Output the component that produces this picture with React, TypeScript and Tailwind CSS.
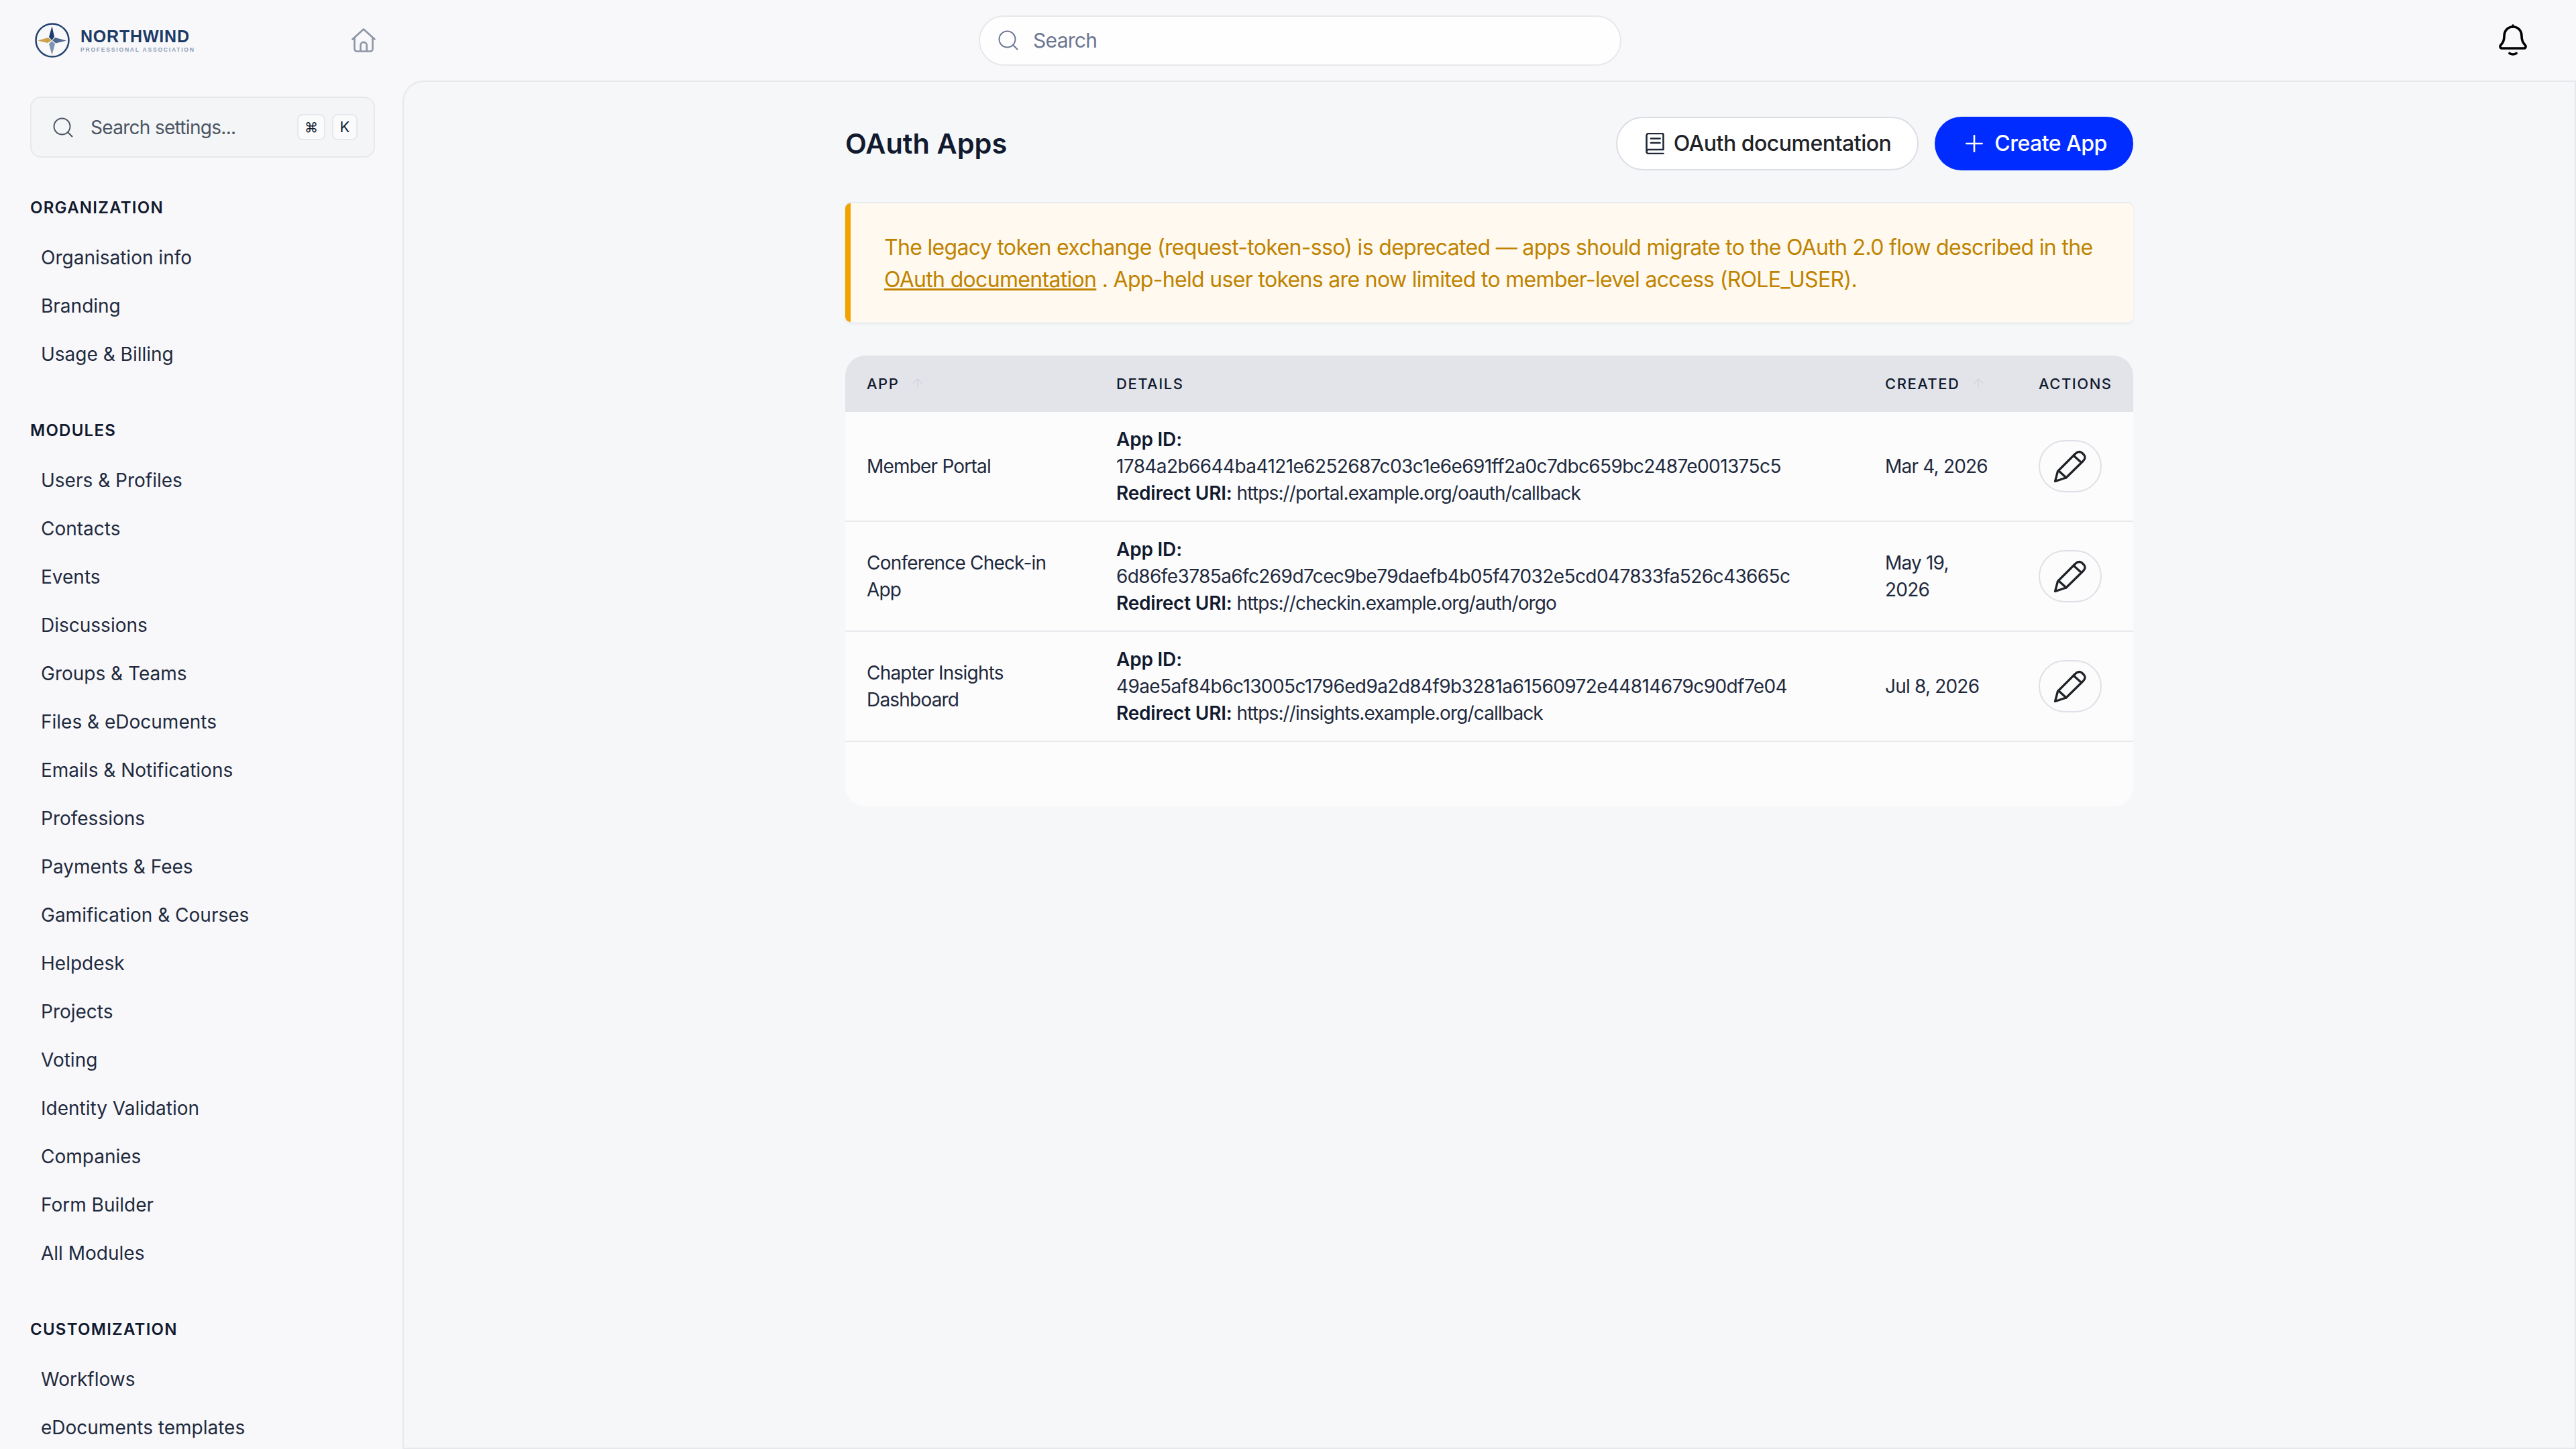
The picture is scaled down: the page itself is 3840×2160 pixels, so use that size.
import React from 'react';
import { Plus, Search, ArrowUp } from 'lucide-react';

const organization = ['Organisation info', 'Branding', 'Usage & Billing'];
const modules = [
    'Users & Profiles', 'Contacts', 'Events', 'Discussions', 'Groups & Teams', 'Files & eDocuments',
    'Emails & Notifications', 'Professions', 'Payments & Fees', 'Gamification & Courses', 'Helpdesk',
    'Projects', 'Voting', 'Identity Validation', 'Companies', 'Form Builder', 'All Modules',
];
const customization = ['Workflows', 'eDocuments templates'];

const apps = [
    {
        name: 'Member Portal',
        id: '1784a2b6644ba4121e6252687c03c1e6e691ff2a0c7dbc659bc2487e001375c5',
        uri: 'https://portal.example.org/oauth/callback',
        created: 'Mar 4, 2026',
    },
    {
        name: 'Conference Check-in App',
        id: '6d86fe3785a6fc269d7cec9be79daefb4b05f47032e5cd047833fa526c43665c',
        uri: 'https://checkin.example.org/auth/orgo',
        created: 'May 19, 2026',
    },
    {
        name: 'Chapter Insights Dashboard',
        id: '49ae5af84b6c13005c1796ed9a2d84f9b3281a61560972e44814679c90df7e04',
        uri: 'https://insights.example.org/callback',
        created: 'Jul 8, 2026',
    },
];

const Logo = () => (
    <svg width="54" height="54" viewBox="0 0 54 54" className="shrink-0">
        <circle cx="27" cy="27" r="24.5" fill="none" stroke="#24446f" strokeWidth="2.5" />
        <path d="M26.5 6 L30 22 L26 27 L22 22 Z" fill="#1d3b6b" />
        <path d="M5 27.5 L21 23 L25.5 27.5 L20 31 Z" fill="#c9a24a" />
        <path d="M48 27.5 L32 31.5 L27 27 L31 23 Z" fill="#4f6a8f" />
        <path d="M26.5 49 L22 32.5 L26.5 28 L31 32.5 Z" fill="#8094b0" />
    </svg>
);

const HomeIcon = () => (
    <svg width="36" height="36" viewBox="0 0 36 36" fill="none" stroke="#8d95a5" strokeWidth="2.6" strokeLinecap="round" strokeLinejoin="round">
        <path d="M1.5 16.5 L18 1.5 L34.5 16.5" />
        <path d="M4.5 14 V31 a3.5 3.5 0 0 0 3.5 3.5 H28 a3.5 3.5 0 0 0 3.5-3.5 V14" />
        <path d="M13.5 34 V25.5 a4.6 4.6 0 0 1 9.2 0 V34" />
    </svg>
);

const BookIcon = () => (
    <svg width="28" height="32" viewBox="0 0 28 32" fill="none" stroke="#1f2937" strokeWidth="2.6" strokeLinecap="round" strokeLinejoin="round">
        <path d="M1.5 27.5 V4 a3 3 0 0 1 3-3 H24.5 a2 2 0 0 1 2 2 V25 H4.5 a3 3 0 0 0 0 6 H26.5" />
        <path d="M8 8.5 H21.5" />
        <path d="M8 15 H21.5" />
    </svg>
);

const PencilIcon = () => (
    <svg width="48" height="48" viewBox="0 0 48 48" fill="none" stroke="#1f2327" strokeWidth="3.3" strokeLinecap="round" strokeLinejoin="round">
        <path d="M1.5 46.5 L5.5 31.5 L31.5 5.5 Q37 0.5 41.5 4 L44.5 7 Q48 11 43.5 16 L18 41 Z" />
        <path d="M7 31 L18 41" />
        <path d="M29 8 L40.5 18.5" />
    </svg>
);

const BellIcon = () => (
    <svg width="42" height="48" viewBox="0 0 42 48" fill="none" stroke="#000000" strokeWidth="3.6" strokeLinecap="round" strokeLinejoin="round">
        <path d="M21 4 C13 4 8 10 8 18 C8 25 6 28 3 31 C1 33 2 36 5 36 H37 C40 36 41 33 39 31 C36 28 34 25 34 18 C34 10 29 4 21 4 Z" />
        <path d="M21 2 V4" />
        <path d="M16 43.5 Q21 46.5 26 43.5" />
    </svg>
);

const SectionTitle: React.FC<{ title: string; className: string }> = ({ title, className }) => (
    <div className={`h-[36px] flex items-center text-[24px] font-semibold tracking-[1.25px] text-[#111a2e] ${className}`}>{title}</div>
);

const NavList: React.FC<{ items: string[] }> = ({ items }) => (
    <ul className="mt-[20px]">
        {items.map(item => (
            <li key={item} className="h-[72px] flex items-center pl-[16px] text-[28px] text-[#1f2a3d]">{item}</li>
        ))}
    </ul>
);

const Sidebar = () => (
    <aside className="w-[600px] shrink-0 pl-[45px] pr-[41px] pt-[24px] overflow-hidden">
        <div className="h-[91px] rounded-[16px] border-2 border-[#e7e8ec] bg-[#f4f5f7] flex items-center pl-[29px] pr-[24px]">
            <Search size={36} strokeWidth={1.3} className="text-[#4b5563] shrink-0" />
            <span className="ml-[23px] text-[28px] tracking-[-0.7px] text-[#4b5563]">Search settings...</span>
            <div className="ml-auto flex gap-[10px]">
                <kbd className="w-[42px] h-[39px] rounded-[8px] border-2 border-[#e7e8ec] bg-[#fbfbfc] flex items-center justify-center text-[20px] text-[#111a2e] font-[inherit]">⌘</kbd>
                <kbd className="w-[38px] h-[39px] rounded-[8px] border-2 border-[#e7e8ec] bg-[#fbfbfc] flex items-center justify-center text-[22px] text-[#111a2e] font-[inherit]">K</kbd>
            </div>
        </div>
        <SectionTitle title="ORGANIZATION" className="mt-[57px]" />
        <NavList items={organization} />
        <SectionTitle title="MODULES" className="mt-[60px]" />
        <NavList items={modules} />
        <SectionTitle title="CUSTOMIZATION" className="mt-[60px]" />
        <NavList items={customization} />
    </aside>
);

const App: React.FC = () => {
    return (
        <div className="w-[3840px] h-[2160px] overflow-hidden flex flex-col bg-[#f8f8fb] font-['Inter',sans-serif] text-[#1f2a3d]">
            <header className="h-[120px] shrink-0 flex items-center">
                <div className="w-[600px] shrink-0 pl-[51px] pr-[40px] flex items-center">
                    <Logo />
                    <div className="ml-[15px] font-['Liberation_Sans',sans-serif]">
                        <div className="text-[25px] leading-[28px] font-bold tracking-[0.8px] text-[#1c3a66]">NORTHWIND</div>
                        <div className="text-[8.6px] leading-[12px] font-bold tracking-[1.75px] text-[#8b9bb3] whitespace-nowrap">PROFESSIONAL ASSOCIATION</div>
                    </div>
                    <div className="ml-auto"><HomeIcon /></div>
                </div>
                <div className="ml-[859px] w-[958px] h-[75px] rounded-full border-2 border-[#e7e8ec] bg-[#fefefe] flex items-center pl-[24px]">
                    <Search size={36} strokeWidth={1.3} className="text-[#6b7690]" />
                    <span className="ml-[19px] text-[30px] tracking-[-0.7px] text-[#6b7690]">Search</span>
                </div>
                <div className="ml-auto mr-[73px]"><BellIcon /></div>
            </header>
            <div className="flex-1 flex min-h-0">
                <Sidebar />
                <main className="flex-1 rounded-tl-[32px] border-2 border-[#e7e8ec] bg-[#f6f7f9] pt-[52px]">
                    <div className="w-[1920px] mx-auto">
                        <div className="flex items-center justify-between">
                            <h1 className="text-[41.5px] font-semibold text-[#111a2e]">OAuth Apps</h1>
                            <div className="flex gap-[24px]">
                                <button className="h-[80px] w-[451px] pl-[3px] rounded-full border-2 border-[#dcdee5] bg-white flex items-center justify-center gap-[14px] text-[32px] font-medium tracking-[-0.5px] text-[#1f2327]">
                                    <BookIcon />
                                    OAuth documentation
                                </button>
                                <button className="h-[80px] w-[296px] rounded-full bg-[#002cff] flex items-center justify-center gap-[10px] text-[32px] font-medium tracking-[-0.5px] text-white">
                                    <Plus size={40} strokeWidth={1.6} />
                                    Create App
                                </button>
                            </div>
                        </div>
                        <div className="mt-[49px] h-[177px] pt-[2px] rounded-[8px] border-l-[8px] border-[#f0a400] bg-[#fff9ef] shadow-[0_-2px_0_0_#e8eaef,0_0_0_1px_#f0f1f4,0_3px_4px_rgba(0,0,0,0.05)] pl-[50px] pr-[40px] flex flex-col justify-center text-[32px] leading-[48px] tracking-[-0.68px] text-[#bf8300]">
                            <p>
                                The legacy token exchange (request-token-sso) is deprecated — apps should migrate to the OAuth 2.0 flow described in the{' '}
                                <span className="underline">OAuth documentation</span> . App-held user tokens are now limited to member-level access (ROLE_USER).
                            </p>
                        </div>
                        <div className="mt-[50px] rounded-[30px] overflow-hidden bg-[#fcfcfd] pb-[96px]">
                            <table className="w-full table-fixed border-collapse text-left text-[28px] leading-[40px] tracking-[-0.8px]">
                                <colgroup>
                                    <col className="w-[372px]" />
                                    <col className="w-[1146px]" />
                                    <col className="w-[230px]" />
                                    <col className="w-[172px]" />
                                </colgroup>
                                <thead>
                                    <tr className="h-[84px] bg-[#e2e4e9] text-[22px] font-medium tracking-[1.5px] text-[#111a2e]">
                                        <th className="px-[32px] font-medium">
                                            <span className="flex items-center gap-[16px]">APP <ArrowUp size={24} strokeWidth={1.4} className="text-[#d3d6dc]" /></span>
                                        </th>
                                        <th className="px-[32px] font-medium">DETAILS</th>
                                        <th className="px-[32px] font-medium">
                                            <span className="flex items-center gap-[16px]">CREATED <ArrowUp size={24} strokeWidth={1.4} className="text-[#d3d6dc]" /></span>
                                        </th>
                                        <th className="pl-[31px] font-medium">ACTIONS</th>
                                    </tr>
                                </thead>
                                <tbody>
                                    {apps.map(app => (
                                        <tr key={app.id} className="border-b-2 border-[#e9eaee]">
                                            <td className="px-[32px] py-[21px]">{app.name}</td>
                                            <td className="px-[32px] py-[21px]">
                                                <div className="font-semibold tracking-[-0.2px] text-[#111a2e]">App ID:</div>
                                                <div className="tracking-[-0.6px]">{app.id}</div>
                                                <div><span className="font-semibold tracking-[-0.2px] text-[#111a2e]">Redirect URI:</span> <span className="tracking-[-0.87px]">{app.uri}</span></div>
                                            </td>
                                            <td className="px-[32px] py-[21px]">{app.created}</td>
                                            <td className="pl-[31px] py-[21px]">
                                                <button className="w-[94px] h-[78px] rounded-full border-2 border-[#dde0e6] flex items-center justify-center">
                                                    <PencilIcon />
                                                </button>
                                            </td>
                                        </tr>
                                    ))}
                                </tbody>
                            </table>
                        </div>
                    </div>
                </main>
            </div>
        </div>
    );
};

export default App;
